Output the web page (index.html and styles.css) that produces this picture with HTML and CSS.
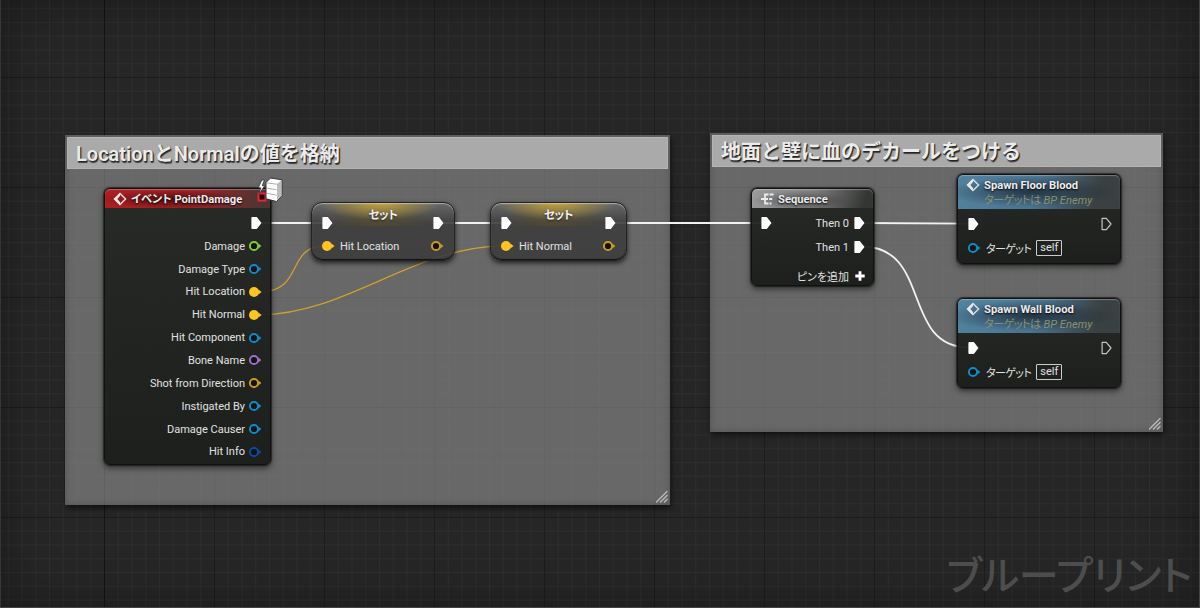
FILE: index.html
```
<!DOCTYPE html>
<html lang="ja">
<head>
    <meta charset="UTF-8">
    <meta name="viewport" content="width=device-width, initial-scale=1.0">
    <title>ブループリント</title>
    <link rel="stylesheet" href="styles.css">
</head>
<body>
    <!-- shared pin and icon shapes -->
    <svg class="defs" width="0" height="0">
        <symbol id="exec" viewBox="0 0 14 14">
            <path d="M3.2 1h4.600l4.700 6-4.700 6H3.200q-.8 0-.8-.8V1.800q0-.8.8-.8z" fill="#fff"/>
        </symbol>
        <symbol id="exec-open" viewBox="0 0 14 14">
            <path d="M3.1 1.400h4.200l4.700 5.600-4.700 5.600H3.100z" fill="none" stroke="#c4c4c4" stroke-width="1.2" stroke-linejoin="round"/>
        </symbol>
        <symbol id="pin" viewBox="0 0 14 14">
            <circle cx="6" cy="7" r="4.1" fill="#111413" stroke="currentColor" stroke-width="2"/>
            <path d="M10.4 4.6L13.400 7l-3 2.400z" fill="currentColor"/>
        </symbol>
        <symbol id="pin-full" viewBox="0 0 14 14">
            <circle cx="6" cy="7" r="5" fill="currentColor"/>
            <path d="M10.4 4.4L13.6 7l-3.2 2.6z" fill="currentColor"/>
        </symbol>
        <symbol id="diamond" viewBox="0 0 14 14">
            <path d="M7 1.400L12.600 7 7 12.600 1.400 7z" fill="none" stroke="#e0e0e0" stroke-width="1.4"/>
            <path d="M7 1L1 7l6 6V10L4.300 7 7 4z" fill="#e8e8e8"/>
        </symbol>
    </svg>

    <div class="graph">
        <div class="comment comment-store">
            <div class="comment-title">LocationとNormalの値を格納</div>
            <svg class="grip" viewBox="0 0 12 12"><path d="M0 11.500L11.500 0M4 11.500L11.500 4M8 11.500L11.500 8"/></svg>
        </div>
        <div class="comment comment-decal">
            <div class="comment-title">地面と壁に血のデカールをつける</div>
            <svg class="grip" viewBox="0 0 12 12"><path d="M0 11.500L11.500 0M4 11.500L11.500 4M8 11.500L11.500 8"/></svg>
        </div>

        <svg class="wires" viewBox="0 0 1200 608">
            <path class="exec-wire" d="M260 223H324M442 223H503M614 223H763M862 223L969 223.700"/>
            <path class="exec-wire" d="M862 246.500C932 246.500 901 347.500 969 347.500"/>
            <path class="vector-wire" d="M260 292C304 292 286 246 324 246"/>
            <path class="vector-wire" d="M260 314.800C345 314.800 415 246 503 246"/>
        </svg>

        <div class="node event-node">
            <div class="node-header red">
                <svg class="icon"><use href="#diamond"/></svg>
                <span>イベント PointDamage</span>
            </div>
            <div class="outputs">
                <div class="pin-row"><svg class="pin exec-out"><use href="#exec"/></svg></div>
                <div class="pin-row">Damage<svg class="pin green"><use href="#pin"/></svg></div>
                <div class="pin-row">Damage Type<svg class="pin blue"><use href="#pin"/></svg></div>
                <div class="pin-row">Hit Location<svg class="pin yellow"><use href="#pin-full"/></svg></div>
                <div class="pin-row">Hit Normal<svg class="pin yellow"><use href="#pin-full"/></svg></div>
                <div class="pin-row">Hit Component<svg class="pin blue"><use href="#pin"/></svg></div>
                <div class="pin-row">Bone Name<svg class="pin purple"><use href="#pin"/></svg></div>
                <div class="pin-row">Shot from Direction<svg class="pin gold"><use href="#pin"/></svg></div>
                <div class="pin-row">Instigated By<svg class="pin blue"><use href="#pin"/></svg></div>
                <div class="pin-row">Damage Causer<svg class="pin blue"><use href="#pin"/></svg></div>
                <div class="pin-row">Hit Info<svg class="pin navy"><use href="#pin"/></svg></div>
            </div>
            <!-- server-only badge -->
            <svg class="server-badge" viewBox="0 0 28 28">
                <rect x="2.500" y="16.500" width="7" height="7" fill="#200" stroke="#f02230" stroke-width="2"/>
                <path d="M5.800 3L2.200 10.800h2.600L3 17.500 8.600 8.600H6.200L8.400 3z" fill="#fff" stroke="#333" stroke-width=".8"/>
                <path d="M10 5.500L14.500 1l11.500 1.800v15.800L20.500 24.500 10 21.800z" fill="#fff" stroke="#333" stroke-width="1"/>
                <path d="M21 7l4.300-3.800v15.200L21 23.300z" fill="#bbb"/>
                <path d="M10.500 5.900l10.500 1.300M11 11.200l9.500 1.600M11 16.400l9.500 1.800" fill="none" stroke="#a5a5a5" stroke-width=".9"/>
            </svg>
        </div>

        <div class="set-node set-location">
            <div class="set-title">セット</div>
            <div class="set-row">
                <svg class="pin"><use href="#exec"/></svg>
                <svg class="pin"><use href="#exec"/></svg>
            </div>
            <div class="set-row">
                <svg class="pin yellow"><use href="#pin-full"/></svg>
                <span>Hit Location</span>
                <svg class="pin gold"><use href="#pin"/></svg>
            </div>
        </div>

        <div class="set-node set-normal">
            <div class="set-title">セット</div>
            <div class="set-row">
                <svg class="pin"><use href="#exec"/></svg>
                <svg class="pin"><use href="#exec"/></svg>
            </div>
            <div class="set-row">
                <svg class="pin yellow"><use href="#pin-full"/></svg>
                <span>Hit Normal</span>
                <svg class="pin gold"><use href="#pin"/></svg>
            </div>
        </div>

        <div class="node sequence-node">
            <div class="node-header gray">
                <svg class="icon" viewBox="0 0 14 14">
                    <path d="M1 7h7M5 2v10M4.200 2.500h4.300M4.200 11.500h4.300M9.700 2.500h3.800M9.200 7h3M9.500 11.500h2" fill="none" stroke="#ececec" stroke-width="1.800"/>
                </svg>
                <span>Sequence</span>
            </div>
            <div class="sequence-body">
                <svg class="pin"><use href="#exec"/></svg>
                <div class="sequence-outputs">
                    <div class="pin-row">Then 0<svg class="pin"><use href="#exec"/></svg></div>
                    <div class="pin-row">Then 1<svg class="pin"><use href="#exec"/></svg></div>
                    <div class="pin-row add-pin">ピンを追加<svg class="pin" viewBox="0 0 14 14"><path d="M8 2.300v9.400M3.300 7h9.400" stroke="#fff" stroke-width="2.800"/></svg></div>
                </div>
            </div>
        </div>

        <div class="node spawn-node spawn-floor">
            <div class="node-header steel">
                <svg class="icon"><use href="#diamond"/></svg>
                <div>
                    <div>Spawn Floor Blood</div>
                    <div class="subtitle"><span class="kana">ターゲットは</span> <i>BP Enemy</i></div>
                </div>
            </div>
            <div class="spawn-row exec-row">
                <svg class="pin"><use href="#exec"/></svg>
                <svg class="pin"><use href="#exec-open"/></svg>
            </div>
            <div class="spawn-row">
                <svg class="pin blue"><use href="#pin"/></svg>
                <span class="kana">ターゲット</span>
                <span class="self">self</span>
            </div>
        </div>

        <div class="node spawn-node spawn-wall">
            <div class="node-header steel">
                <svg class="icon"><use href="#diamond"/></svg>
                <div>
                    <div>Spawn Wall Blood</div>
                    <div class="subtitle"><span class="kana">ターゲットは</span> <i>BP Enemy</i></div>
                </div>
            </div>
            <div class="spawn-row exec-row">
                <svg class="pin"><use href="#exec"/></svg>
                <svg class="pin"><use href="#exec-open"/></svg>
            </div>
            <div class="spawn-row">
                <svg class="pin blue"><use href="#pin"/></svg>
                <span class="kana">ターゲット</span>
                <span class="self">self</span>
            </div>
        </div>

        <div class="watermark">ブループリント</div>
    </div>
</body>
</html>
```

FILE: styles.css
```
body {
    margin: 0;
    font-family: Roboto, 'Noto Sans CJK JP', sans-serif;
    font-size: 11px;
    color: #e2e2e2;
    background: #262626;
}

svg {
    display: block;
    flex: none;
}

.defs {
    position: absolute;
}

.graph {
    position: relative;
    width: 1200px;
    height: 608px;
    overflow: hidden;
    box-shadow: inset -1px -1px #444, inset 1px 0 #363636, inset 0 0 50px rgba(0, 0, 0, 0.35);
    background-color: #262626;
    background-image:
        linear-gradient(#141414, #141414),
        linear-gradient(to right, #1d1d1d 1px, transparent 1px),
        linear-gradient(to bottom, #1c1c1c 1px, transparent 1px),
        linear-gradient(to right, #2e2e2e 1px, transparent 1px),
        linear-gradient(to bottom, #2e2e2e 1px, transparent 1px);
    background-size: 1px 100%, 110px 110px, 110px 110px, 13.75px 13.75px, 13.75px 13.75px;
    background-position: 104px 0, 104px 0, 0 77px, 104px 0, 0 77px;
    background-repeat: no-repeat, repeat, repeat, repeat, repeat;
}

/* items on the graph are placed by their canvas coordinates */
.comment, .wires, .node, .set-node, .watermark {
    position: absolute;
    box-sizing: border-box;
}

.comment {
    padding: 2px;
    background: rgba(152, 152, 152, 0.58);
    box-shadow: inset 0 0 6px rgba(60, 60, 60, 0.55), 1px 3px 6px rgba(0, 0, 0, 0.6);
}

.comment-store {
    left: 65px;
    top: 135px;
    width: 605px;
    height: 370px;
}

.comment-decal {
    left: 710px;
    top: 133px;
    width: 453px;
    height: 299px;
}

.comment-title {
    height: 32px;
    box-sizing: border-box;
    padding-left: 8px;
    border: 1px solid #b4b4b4;
    background: #aaa;
    color: #ececec;
    font-size: 20px;
    font-weight: 600;
    line-height: 33px;
    white-space: nowrap;
    text-shadow: 1px 1px 1px #222, 1px 2px 1px #444;
}

.grip {
    position: absolute;
    right: 2px;
    bottom: 2px;
    width: 12px;
    height: 12px;
    fill: none;
    stroke: #bbb;
    stroke-width: 1.3;
}

.wires {
    left: 0;
    top: 0;
    width: 1200px;
    height: 608px;
    fill: none;
}

.exec-wire {
    stroke: #f2f2f2;
    stroke-width: 1.8;
}

.vector-wire {
    stroke: #d0a02c;
    stroke-width: 1.3;
}

.node {
    border: 1px solid #111;
    border-radius: 6px;
    background: linear-gradient(rgba(35, 38, 35, 0.94), rgba(26, 29, 26, 0.97));
    box-shadow: 0 0 1px 1px rgba(15, 15, 15, 0.6), 0 3px 6px rgba(0, 0, 0, 0.55);
}

.node-header {
    display: flex;
    align-items: center;
    gap: 4px;
    height: 19px;
    padding-left: 8px;
    border-radius: 5px 5px 0 0;
    box-shadow: inset 0 1px 1px rgba(255, 255, 255, 0.3);
    color: #ededed;
    font-size: 11.2px;
    font-weight: 700;
    line-height: 15px;
    white-space: nowrap;
    font-feature-settings: 'palt';
    text-shadow: 0 1px 2px #000;
}

.node-header > span {
    padding-top: 1px;
}

.red {
    background: radial-gradient(ellipse 75px 9px at 42% 55%, rgba(30, 5, 5, 0.65), transparent), linear-gradient(100deg, #ad1e20, #9d2225 55%, #4b3534 95%);
}

.gray {
    background: radial-gradient(ellipse 48px 9px at 40% 60%, rgba(40, 40, 40, 0.55), transparent), linear-gradient(110deg, #9b9b9b, #7d7d7d 50%, #343634 92%);
}

.steel {
    background: radial-gradient(ellipse 85px 15px at 45% 50%, rgba(20, 28, 36, 0.7), transparent), linear-gradient(105deg, #5282a0, #497490 48%, #3a4143 85%);
}

.icon {
    width: 14px;
    height: 14px;
}

.pin {
    width: 14px;
    height: 14px;
}

.pin-row {
    display: flex;
    align-items: center;
    justify-content: flex-end;
    gap: 3px;
    height: 22.85px;
    white-space: nowrap;
}

.green { color: #82cc3a; }
.blue { color: #108bc8; }
.yellow { color: #fdc422; }
.gold { color: #c99a23; }
.purple { color: #a36bcb; }
.navy { color: #104a9e; }

.event-node {
    left: 104px;
    top: 188px;
    width: 167px;
    height: 277px;
}

.event-node .outputs {
    padding: 4px 8px 0 0;
}

.event-node .exec-out {
    margin-right: -1px;
}

.server-badge {
    position: absolute;
    left: 151px;
    top: -12px;
    width: 28px;
    height: 28px;
}

.set-node {
    top: 202px;
    height: 59px;
    border: 1px solid #222;
    border-radius: 11px;
    background:
        radial-gradient(ellipse 60px 17px at 48% 0, rgba(210, 173, 62, 0.85), transparent),
        linear-gradient(to right, transparent 12%, rgba(110, 90, 20, 0.35) 45%, transparent 85%) 0 0 / 100% 23px no-repeat,
        linear-gradient(rgba(105, 105, 105, 0.9), rgba(61, 61, 61, 0.9) 35%, rgba(60, 60, 60, 0.9));
    box-shadow: inset 0 1px 1px rgba(220, 220, 220, 0.6), inset 0 -1px 1px #111, 0 2px 5px rgba(0, 0, 0, 0.7);
}

.set-location {
    left: 311px;
    width: 144px;
}

.set-normal {
    left: 490px;
    width: 137px;
}

.set-title {
    height: 8px;
    padding-top: 5px;
    color: #f0f0f0;
    font-size: 11.5px;
    font-weight: 700;
    line-height: 15px;
    text-align: center;
    letter-spacing: -0.5px;
    font-feature-settings: 'palt';
    text-shadow: 0 1px 2px #222;
}

.set-row {
    display: flex;
    align-items: center;
    gap: 4px;
    height: 14px;
    padding: 0 9px 0 8px;
}

.set-row + .set-row {
    margin-top: 9px;
    padding: 0 10px 0 9px;
}

.set-row span {
    padding-left: 1px;
}

.set-row .pin:last-child {
    margin-left: auto;
}

.sequence-node {
    left: 751px;
    top: 188px;
    width: 123px;
    height: 98px;
}

.sequence-body {
    display: flex;
    justify-content: space-between;
    padding: 3px 7px 0;
}

.sequence-body > .pin {
    margin-top: 5px;
}

.sequence-outputs .pin-row {
    height: 24px;
}

.sequence-outputs .add-pin {
    height: 33px;
    font-feature-settings: 'palt';
}

.spawn-node {
    left: 957px;
    width: 164px;
    height: 90px;
}

.spawn-floor {
    top: 174px;
}

.spawn-wall {
    top: 298px;
}

.spawn-node .node-header {
    align-items: flex-start;
    height: 31px;
    padding-top: 3px;
}

.subtitle {
    color: #87906e;
    font-size: 11.2px;
    font-weight: 400;
    text-shadow: none;
}

.kana {
    font-feature-settings: 'palt';
    letter-spacing: -0.6px;
}

.spawn-row {
    display: flex;
    align-items: center;
    gap: 5px;
    height: 18px;
    padding: 0 7px 0 9px;
}

.exec-row {
    justify-content: space-between;
    height: 30px;
    padding-left: 8px;
}

.self {
    padding: 0 3px;
    border: 1px solid #ccc;
    border-radius: 1px;
    line-height: 14px;
}

.watermark {
    right: 8px;
    bottom: 6px;
    color: #4d4d4d;
    font-size: 40px;
    font-weight: 500;
    line-height: 50px;
    white-space: nowrap;
    font-feature-settings: 'palt';
}
```
